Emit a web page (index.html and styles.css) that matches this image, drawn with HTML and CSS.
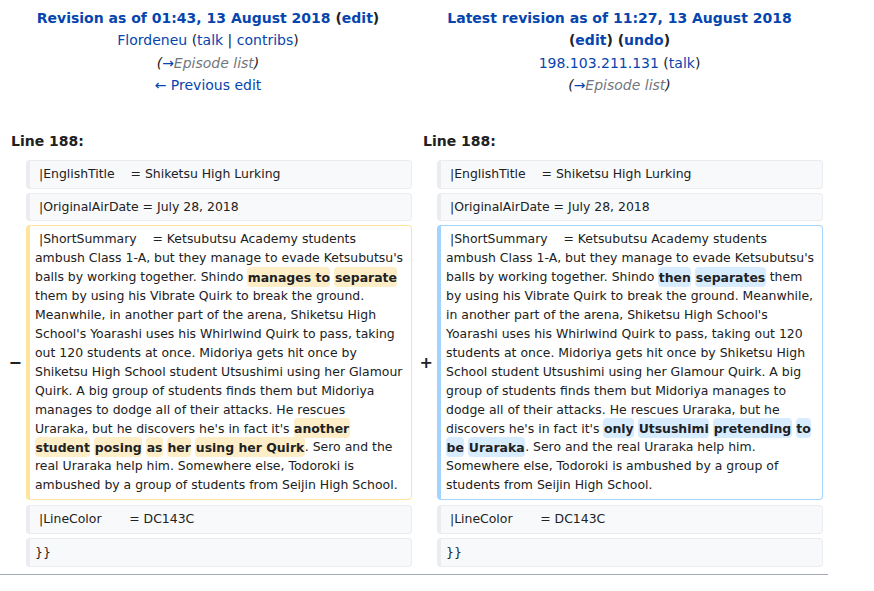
FILE: index.html
```html
<!DOCTYPE html>
<html>
<head>
<meta charset="utf-8">
<link rel="stylesheet" href="styles.css">
</head>
<body>
<div class="page">
  <div class="diff">
    <div class="title">
      <div><strong><a href="#">Revision as of 01:43, 13 August 2018</a> <span class="paren">(<a href="#">edit</a>)</span></strong></div>
      <div><a href="#">Flordeneu</a> <span class="paren">(<a href="#">talk</a> | <a href="#">contribs</a>)</span></div>
      <div class="comment">(<a href="#" class="arrow">→</a><span class="auto">Episode list</span>)</div>
      <div><a href="#">← Previous edit</a></div>
    </div>
    <div class="title">
      <div><strong><a href="#">Latest revision as of 11:27, 13 August 2018</a> <span class="nowrap paren">(<a href="#">edit</a>) (<a href="#">undo</a>)</span></strong></div>
      <div><a href="#">198.103.211.131</a> <span class="paren">(<a href="#">talk</a>)</span></div>
      <div class="comment">(<a href="#" class="arrow">→</a><span class="auto">Episode list</span>)</div>
    </div>

    <div class="lineno">Line 188:</div>
    <div class="lineno">Line 188:</div>

    <div class="marker"></div>
    <div class="box ctx"> |EnglishTitle    = Shiketsu High Lurking</div>
    <div class="marker"></div>
    <div class="box ctx"> |EnglishTitle    = Shiketsu High Lurking</div>

    <div class="marker"></div>
    <div class="box ctx"> |OriginalAirDate = July 28, 2018</div>
    <div class="marker"></div>
    <div class="box ctx"> |OriginalAirDate = July 28, 2018</div>

    <div class="marker">−</div>
    <div class="box del summary"> |ShortSummary    = Ketsubutsu Academy students
ambush Class 1-A, but they manage to evade Ketsubutsu's
balls by working together. Shindo <span class="chg">manages to</span> <span class="chg">separate</span>
them by using his Vibrate Quirk to break the ground.
Meanwhile, in another part of the arena, Shiketsu High
School's Yoarashi uses his Whirlwind Quirk to pass, taking
out 120 students at once. Midoriya gets hit once by
Shiketsu High School student Utsushimi using her Glamour
Quirk. A big group of students finds them but Midoriya
manages to dodge all of their attacks. He rescues
Uraraka, but he discovers he's in fact it's <span class="chg">another</span>
<span class="chg">student</span> <span class="chg">posing</span> <span class="chg">as</span> <span class="chg">her</span> <span class="chg">using her Quirk</span>. Sero and the
real Uraraka help him. Somewhere else, Todoroki is
ambushed by a group of students from Seijin High School.</div>
    <div class="marker">+</div>
    <div class="box add summary"> |ShortSummary    = Ketsubutsu Academy students
ambush Class 1-A, but they manage to evade Ketsubutsu's
balls by working together. Shindo <span class="chg">then</span> <span class="chg">separates</span> them
by using his Vibrate Quirk to break the ground. Meanwhile,
in another part of the arena, Shiketsu High School's
Yoarashi uses his Whirlwind Quirk to pass, taking out 120
students at once. Midoriya gets hit once by Shiketsu High
School student Utsushimi using her Glamour Quirk. A big
group of students finds them but Midoriya manages to
dodge all of their attacks. He rescues Uraraka, but he
discovers he's in fact it's <span class="chg">only</span> <span class="chg">Utsushimi</span> <span class="chg">pretending</span> <span class="chg">to</span>
<span class="chg">be</span> <span class="chg">Uraraka</span>. Sero and the real Uraraka help him.
Somewhere else, Todoroki is ambushed by a group of
students from Seijin High School.</div>

    <div class="marker"></div>
    <div class="box ctx after"> |LineColor       = DC143C</div>
    <div class="marker"></div>
    <div class="box ctx after"> |LineColor       = DC143C</div>

    <div class="marker"></div>
    <div class="box ctx">}}</div>
    <div class="marker"></div>
    <div class="box ctx">}}</div>
  </div>
  <div class="diff-hr"></div>
</div>
</body>
</html>
```

FILE: styles.css
```css
html, body {
  margin: 0;
  padding: 0;
  background: #ffffff;
}
body {
  font-family: "DejaVu Sans", sans-serif;
  color: #202122;
  font-size: 14px;
}
.page {
  width: 828px;
}
a {
  color: #0645ad;
  text-decoration: none;
}
.diff {
  display: grid;
  grid-template-columns: 18px 386px 17px 386px;
  column-gap: 4px;
  row-gap: 4px;
  padding: 4px 4px 7px 4px;
}
.title {
  grid-column: span 2;
  text-align: center;
  line-height: 22.4px;
  padding-top: 3px;
}
.paren {
  color: #202122;
}
.nowrap {
  white-space: nowrap;
}
.comment {
  font-style: italic;
  color: #202122;
}
.comment .auto {
  color: #72777d;
}
.lineno {
  grid-column: span 2;
  font-weight: bold;
  line-height: 22.4px;
  padding: 29px 7px 3.6px 7px;
}
.marker {
  font-weight: bold;
  font-size: 16px;
  display: flex;
  align-items: center;
  justify-content: flex-end;
  padding-right: 0;
}
.box {
  font-size: 12.45px;
  line-height: 18.9px;
  white-space: pre-wrap;
  overflow-wrap: break-word;
  border-style: solid;
  border-width: 1px 1px 1px 4px;
  border-radius: 4px;
  padding: 4px 5px 4px 5px;
}
.summary {
  white-space: pre;
}
.after {
  margin-top: 1px;
}
.ctx {
  background: #f8f9fa;
  border-color: #eaecf0;
}
.del {
  background: #ffffff;
  border-color: #ffe49c;
}
.add {
  background: #ffffff;
  border-color: #a3d3ff;
}
.chg {
  font-weight: bold;
  border-radius: 4px;
  padding: 2.5px 0.5px;
}
.del .chg {
  background: #feeec8;
}
.add .chg {
  background: #d8ecff;
}
.diff-hr {
  border-top: 1px solid #a2a9b1;
  height: 0;
}
```
